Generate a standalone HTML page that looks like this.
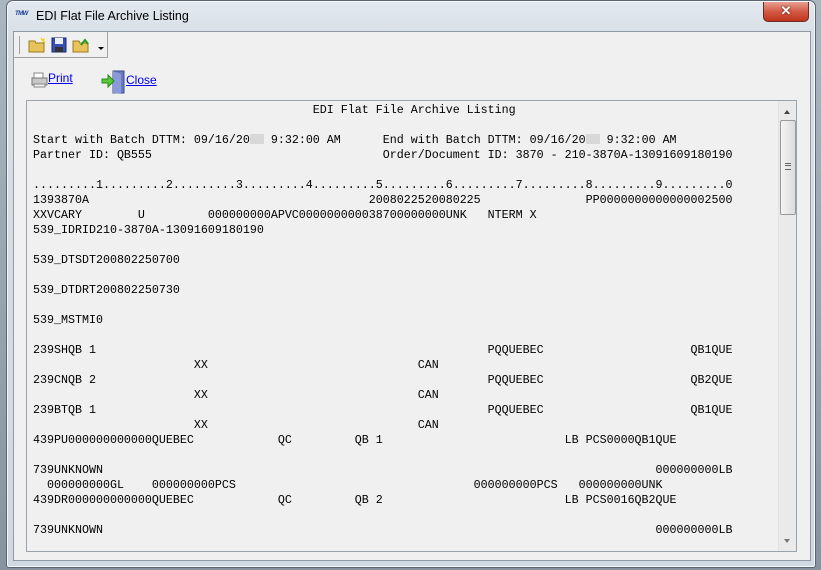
<!DOCTYPE html>
<html><head><meta charset="utf-8">
<style>
body{margin:0;width:821px;height:570px;overflow:hidden;background:#6d7b86;font-family:"Liberation Sans",sans-serif;position:relative}
.bg{position:absolute;left:0;top:0;width:821px;height:570px;background:linear-gradient(#aab6c0,#8794a0)}
.frame{position:absolute;left:6px;top:0;width:808px;height:566px;border:1px solid #5b6670;border-radius:7px 7px 3px 3px;background:linear-gradient(#e2e8ee,#d6dee6 40px,#d0d9e1);box-shadow:inset 0 0 0 1px #f4f7fa}
.title{position:absolute;left:36px;top:9px;font-size:12.5px;color:#000}
.logo{position:absolute;left:15px;top:11px;width:14px;height:9px;font-size:6px;font-weight:bold;color:#1a3f9a;letter-spacing:-0.5px;font-style:italic}
.x{position:absolute;left:763px;top:2px;width:44px;height:19px;border:1px solid #6b2a22;border-top:none;border-radius:0 0 5px 5px;background:linear-gradient(#e8a094,#d35a45 50%,#c0331c);color:#fff;font-weight:bold;font-size:13px;text-align:center;line-height:18px;text-shadow:0 0 2px #500}
.client{position:absolute;left:13px;top:31px;width:796px;height:528px;background:#f0f0f0;border:1px solid #8e9aa5}
.tb{position:absolute;left:14px;top:32px;width:93px;height:25px;border:1px solid #a0a0a0;border-left:none;border-top:none;background:#f0f0f0}
a{color:#0000ee;text-decoration:underline;font-size:12px;position:absolute}
.panel{position:absolute;left:26px;top:100px;width:769px;height:450px;border:1px solid #9aa2ab;background:#f0f0f0;overflow:hidden}
pre{position:absolute;left:6px;top:2px;margin:0;font-family:"Liberation Mono",monospace;font-size:11.67px;line-height:15px;color:#000}
.sb{position:absolute;right:0;top:0;width:17px;height:450px;background:#eaeaea;border-left:1px solid #e2e2e2}
.thumb{position:absolute;left:1px;top:19px;width:14px;height:93px;border:1px solid #9a9a9a;border-radius:2px;background:linear-gradient(90deg,#f4f4f4,#dcdcdc)}
.bl{display:inline-block;width:14px;height:10px;background:#d8d8d8;vertical-align:-1px}
</style></head><body>
<div class="bg"></div>
<div class="frame"></div>
<div class="logo">TMW</div>
<div class="title">EDI Flat File Archive Listing</div>
<div class="x">✕</div>
<div class="client"></div>
<div class="tb">
 <div style="position:absolute;left:5px;top:4px;width:1px;height:18px;background:#a0a0a0"></div>
 <svg style="position:absolute;left:14px;top:5px" width="18" height="16"><path d="M1 4h6l1 2h8v9H1z" fill="#e8c25a" stroke="#9a7a20"/><path d="M13 1l1 2 2-1-1 2 2 1-2 0" stroke="#f0d000" fill="none"/></svg>
 <svg style="position:absolute;left:37px;top:5px" width="16" height="16"><rect x="1" y="1" width="14" height="14" fill="#3a4fb0" stroke="#1a2570"/><rect x="4" y="1" width="8" height="6" fill="#e8eefa"/><rect x="4" y="10" width="8" height="5" fill="#333"/></svg>
 <svg style="position:absolute;left:58px;top:4px" width="18" height="17"><path d="M1 5h6l1 2h8v9H1z" fill="#e8c25a" stroke="#9a7a20"/><path d="M9 9l4-5 3 4" stroke="#2a9a20" stroke-width="2" fill="none"/></svg>
 <div style="position:absolute;left:84px;top:15px;border:3px solid transparent;border-top:3px solid #000"></div>
</div>
<svg style="position:absolute;left:31px;top:72px" width="17" height="16"><rect x="3" y="1" width="9" height="6" fill="#fff" stroke="#888"/><rect x="1" y="6" width="15" height="7" fill="#c8c8c8" stroke="#777"/><rect x="3" y="12" width="11" height="3" fill="#eee" stroke="#888"/></svg>
<a style="left:48px;top:71px">Print</a>
<svg style="position:absolute;left:101px;top:70px" width="25" height="24"><rect x="12" y="1" width="11" height="22" fill="#6a7ac0" stroke="#3a4a8a"/><path d="M12 1l8 3v20l-8-1z" fill="#8a9ad8"/><path d="M1 9h6V5l6 6-6 6v-4H1z" fill="#5ac83a" stroke="#2a8a1a"/></svg>
<a style="left:126px;top:73px">Close</a>
<div class="panel">
<pre>                                        EDI Flat File Archive Listing

Start with Batch DTTM: 09/16/20<span class="bl"></span> 9:32:00 AM      End with Batch DTTM: 09/16/20<span class="bl"></span> 9:32:00 AM
Partner ID: QB555                                 Order/Document ID: 3870 - 210-3870A-13091609180190

.........1.........2.........3.........4.........5.........6.........7.........8.........9.........0
1393870A                                        2008022520080225               PP0000000000000002500
XXVCARY        U         000000000APVC000000000038700000000UNK   NTERM X
539_IDRID210-3870A-13091609180190

539_DTSDT200802250700

539_DTDRT200802250730

539_MSTMI0

239SHQB 1                                                        PQQUEBEC                     QB1QUE
                       XX                              CAN
239CNQB 2                                                        PQQUEBEC                     QB2QUE
                       XX                              CAN
239BTQB 1                                                        PQQUEBEC                     QB1QUE
                       XX                              CAN
439PU000000000000QUEBEC            QC         QB 1                          LB PCS0000QB1QUE

739UNKNOWN                                                                               000000000LB
  000000000GL    000000000PCS                                  000000000PCS   000000000UNK
439DR000000000000QUEBEC            QC         QB 2                          LB PCS0016QB2QUE

739UNKNOWN                                                                               000000000LB
</pre>
<div class="sb">
 <div style="position:absolute;left:5px;top:6px;border:3px solid transparent;border-bottom:4px solid #444"></div>
 <div class="thumb"><div style="position:absolute;left:4px;top:42px;width:6px;height:5px;border-top:1px solid #666;border-bottom:1px solid #666"></div><div style="position:absolute;left:4px;top:44px;width:6px;height:1px;background:#666"></div></div>
 <div style="position:absolute;left:5px;top:438px;border:3px solid transparent;border-top:4px solid #777"></div>
</div>
</div>
</body></html>
